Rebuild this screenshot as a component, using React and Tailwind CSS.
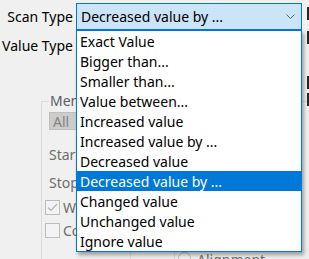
import React from 'react';

const scanTypes = [
  'Exact Value',
  'Bigger than...',
  'Smaller than...',
  'Value between...',
  'Increased value',
  'Increased value by ...',
  'Decreased value',
  'Decreased value by ...',
  'Changed value',
  'Unchanged value',
  'Ignore value',
];

const selected = 'Decreased value by ...';

const Chevron = () => (
  <svg width="9" height="5" viewBox="0 0 9 5" className="shrink-0">
    <path d="M0.5 0.5 L4.5 4.5 L8.5 0.5" fill="none" stroke="#5f5f5f" strokeWidth="1" />
  </svg>
);

const CheckBox = ({ checked = false }) => (
  <div className="w-[15px] h-[15px] border border-[#bcbcbc] bg-[#f3f3f3] flex items-center justify-center shrink-0">
    {checked && (
      <svg width="11" height="9" viewBox="0 0 11 9">
        <path d="M1 4.5 L4 7.5 L10 1" fill="none" stroke="#b4b4b4" strokeWidth="1.2" />
      </svg>
    )}
  </div>
);

// cut-off checkboxes sitting at the far right edge of the window
const EdgeBox = ({ className }) => (
  <div className={`w-[13px] h-[13px] border-2 border-[#262626] bg-white ${className}`} />
);

export default function App() {
  return (
    <div className="relative w-[309px] h-[259px] overflow-hidden bg-[#f0f0f0] font-['Noto_Sans',sans-serif] text-[14px] text-black">
      <div className="flex">
        {/* Form column */}
        <div className="w-[307px] shrink-0 flex flex-col">
          {/* Scan Type */}
          <div className="flex items-center mt-[3px]">
            <div className="w-[73px] text-right leading-[27px]">Scan Type</div>
            <div className="ml-[3px] w-[226px] h-[27px] border border-[#0078d7] bg-[#cce4f7] flex items-center pl-[4px] pr-[6px]">
              <span className="flex-1 whitespace-nowrap">{selected}</span>
              <Chevron />
            </div>
          </div>

          {/* Value Type */}
          <div className="flex items-center mt-[4px]">
            <div className="w-[73px] text-right leading-[24px]">Value Type</div>
          </div>

          {/* Memory Scan Options group */}
          <fieldset className="ml-[41px] mt-[34px] border-l border-t border-[#dcdcdc] pl-[7px] h-[170px]">
            <legend className="px-[1px] leading-[18px] text-[#5c5c6a] whitespace-nowrap">Memory Scan Options</legend>

            <div className="mt-[2px] w-[60px] h-[18px] bg-[#cccccc] border border-[#bfbfbf] flex items-center pl-[3px] text-[#838383]">
              All
            </div>

            <div className="mt-[15px] text-[#6d6d6d] leading-[20px]">Start</div>
            <div className="mt-[8px] text-[#6d6d6d] leading-[20px]">Stop</div>

            <div className="mt-[7px] ml-[-4px] flex items-center gap-[3px] text-[#6d6d6d]">
              <CheckBox checked />
              <span className="leading-[15px]">Writable</span>
            </div>
            <div className="mt-[8px] ml-[-4px] flex items-center gap-[3px] text-[#6d6d6d]">
              <CheckBox />
              <span className="leading-[15px]">CopyOnWrite</span>
            </div>

            {/* bottom row: fast scan / alignment boxes */}
            <div className="mt-[12px] flex">
              <div className="ml-[81px] w-[44px] h-[20px] border-l border-[#dcdcdc]" />
              <div className="h-[20px] border-l border-[#dcdcdc] flex items-start pl-[3px] pt-[2px] gap-[6px] text-[#6d6d6d]">
                <div className="w-[13px] h-[13px] rounded-full border border-[#bcbcbc] bg-[#f3f3f3]" />
                <span className="leading-[16px]">Alignment</span>
              </div>
            </div>
          </fieldset>
        </div>

        {/* Right column, mostly off-screen */}
        <div className="flex flex-col">
          <EdgeBox className="mt-[7px]" />
          <EdgeBox className="mt-[11px]" />
          <EdgeBox className="mt-[32px]" />
          <EdgeBox className="mt-[4px]" />
        </div>
      </div>

      {/* Open dropdown list */}
      <ul className="absolute left-[76px] top-[30px] w-[226px] border border-[#0078d7] bg-white shadow-[2px_3px_4px_rgba(0,0,0,0.35)]">
        {scanTypes.map((t) => (
          <li
            key={t}
            className={`h-[20px] flex items-center pl-[3px] whitespace-nowrap ${
              t === selected ? 'bg-[#0078d7] text-white' : ''
            }`}
          >
            {t}
          </li>
        ))}
      </ul>
    </div>
  );
}
